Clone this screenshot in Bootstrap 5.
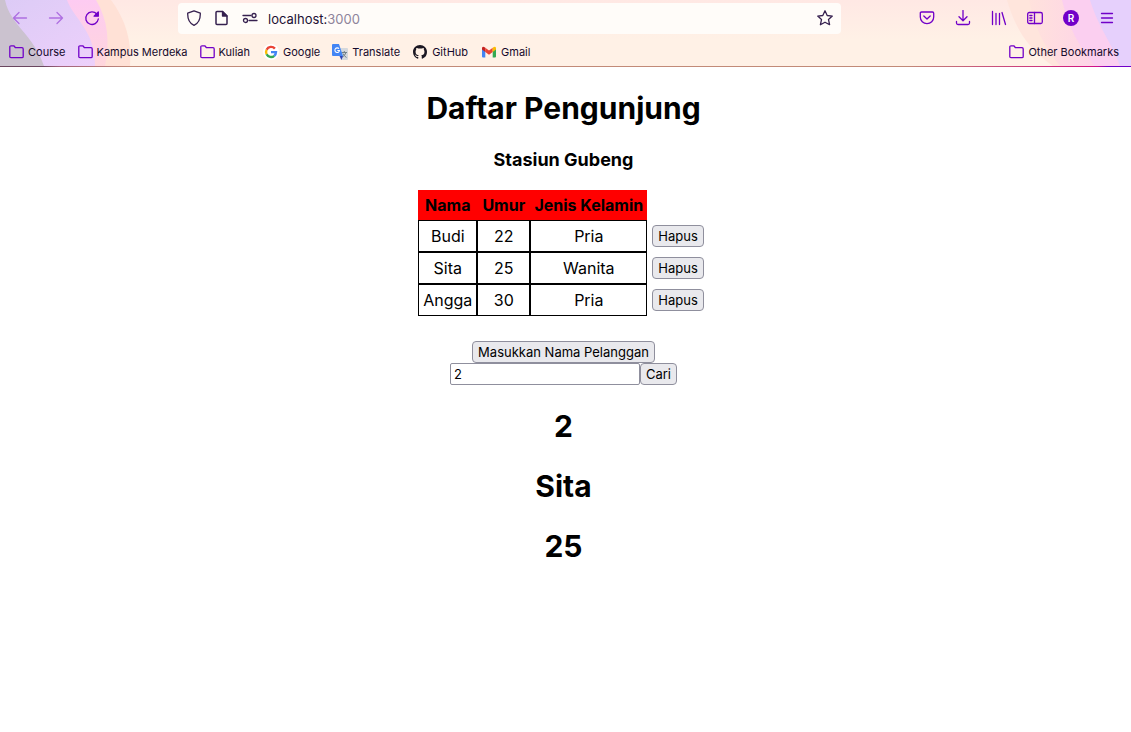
<!DOCTYPE html>
<html lang="id">
<head>
<meta charset="utf-8">
<meta name="viewport" content="width=device-width, initial-scale=1">
<title>Daftar Pengunjung</title>
<link rel="stylesheet" href="https://cdn.jsdelivr.net/npm/bootstrap@5.3.0/dist/css/bootstrap.min.css">
<script src="https://cdn.jsdelivr.net/npm/bootstrap@5.3.0/dist/js/bootstrap.bundle.min.js" defer></script>
<style>
  body { font-family: Inter, "Liberation Sans", sans-serif; font-size: 16px; color: #000; background: #fff; }
  .browser { background: linear-gradient(#ffe8e4, #fff1e6 60%); position: relative; isolation: isolate; }
  .browser::after { content: ""; display: block; height: 1px; background: linear-gradient(90deg, #6b4760 0, #6b4760 44px, #a3627e 60px, #c28a78 130px, #c28a78 80%, #d0207f 95%, #d0108a 97%, #7100c8 98%); }
  .theme-art { position: absolute; top: 0; height: 66px; z-index: -1; }
  .toolbar { height: 36px; padding: 0 6px 0 2px; }
  .tool { width: 36px; height: 36px; padding: 0; border: 0; background: none; color: #7100c8; display: grid; place-items: center; }
  .tool:disabled { opacity: .45; color: #7100c8; }
  .address { height: 31px; margin: 0 68px; border-radius: 4px; background: #fffcf9; color: #36204f; padding: 0 8px; }
  .address-text { font-size: 13px; line-height: 20px; color: #1d1133; padding: 2px 0 0 10px; }
  .address-text span { color: #8e849b; }
  .bookmarks { height: 30px; padding: 2px 12px 0 9px; gap: 12px; }
  .bookmarks a { font-size: 11px; line-height: 16px; color: #15092b; text-decoration: none; display: flex; align-items: center; gap: 4px; white-space: nowrap; }
  svg { display: block; flex: none; }
  .line { fill: none; stroke: currentColor; stroke-width: 1.3; stroke-linecap: round; stroke-linejoin: round; }
  .folder { color: #7100c8; }
  main { padding: 22px 4px 0 0; text-align: center; }
  .big { font-size: 30px; line-height: 38px; font-weight: 700; margin: 0 0 22px; }
  .station { font-size: 18px; line-height: 22px; font-weight: 700; margin: 0 0 19px; }
  .visitors { border-collapse: separate; border-spacing: 0; margin: 0 auto 25px; font-size: 16px; line-height: 20px; }
  .visitors th { background: red; padding: 5px 0; font-weight: 700; text-align: center; white-space: nowrap; }
  .visitors td { border: 1px solid #000; padding: 5px 4px; }
  .visitors th:first-child { width: 59px; }
  .visitors th:nth-child(2) { width: 53px; }
  .visitors th:nth-child(3) { width: 117px; }
  .visitors .bare { border: 0; padding: 5px; background: none; }
  .plain-btn { display: block; height: 22px; font-size: 13px; line-height: 20px; padding: 0 5px; border: 1px solid #8f8f9d; border-radius: 4px; background: #e9e9ed; color: #000; white-space: nowrap; }
  .search-form { margin-bottom: 22px; }
  .search-box { width: 190px; height: 22px; font-size: 13px; padding: 0 3px; border: 1px solid #8f8f9d; border-radius: 2px; color: #000; }
</style>
</head>
<body>
<header class="browser">
  <svg class="theme-art start-0" width="140" height="66" viewBox="0 0 140 66" aria-hidden="true">
    <defs><linearGradient id="lav" x2="1" y2="1"><stop stop-color="#dccbf6"/><stop offset="1" stop-color="#edd0fb"/></linearGradient>
    <linearGradient id="pnk" x2="0" y2="1"><stop stop-color="#fdcbf2"/><stop offset="1" stop-color="#ffd6dc"/></linearGradient></defs>
    <path d="M0 0H111C126 20 132 42 130 66H0Z" fill="#ffe1d6"/>
    <path d="M0 0H96C108 20 110 42 105 66H0Z" fill="url(#pnk)"/>
    <path d="M0 0H67C73 18 96 31 95 66H0Z" fill="url(#lav)"/>
    <path d="M0 0H5C10 25 34 35 44 66H0Z" fill="#cbc2cf"/>
  </svg>
  <svg class="theme-art end-0" width="131" height="66" viewBox="0 0 131 66" aria-hidden="true">
    <defs><linearGradient id="rp" x2="1"><stop stop-color="#ffe2dc"/><stop offset="1" stop-color="#fdcbee"/></linearGradient></defs>
    <path d="M7 0C15 28 28 49 53 66H131V0Z" fill="#ffe5dc"/>
    <path d="M29 0C34 27 45 48 60 66H131V0Z" fill="url(#rp)"/>
    <path d="M62 0C68 26 79 47 95 66H131V0Z" fill="#fbcff0"/>
    <path d="M90 0C99 29 112 43 120 66H131V0Z" fill="#e6d0fc"/>
  </svg>
  <nav class="toolbar d-flex align-items-center" aria-label="Navigasi">
    <button class="tool" disabled aria-label="Kembali"><svg class="line" width="16" height="16" viewBox="0 0 16 16"><path d="M14.500 8H1.500M7 2.500 1.500 8 7 13.500"/></svg></button>
    <button class="tool" disabled aria-label="Maju"><svg class="line" width="16" height="16" viewBox="0 0 16 16"><path d="M1.500 8H14.500M9 2.500 14.500 8 9 13.500"/></svg></button>
    <button class="tool" aria-label="Muat ulang"><svg class="line" width="16" height="16" viewBox="0 0 16 16"><path d="M12.800 4A6.300 6.300 0 1 0 14.300 9"/><path fill="currentColor" d="M14.300 2V6.200H10.100Z"/></svg></button>
    <div class="address d-flex align-items-center flex-grow-1">
      <svg class="line" width="16" height="16" viewBox="0 0 16 16"><path d="M8 .8 14.300 3.200C14.500 9.500 12 13.500 8 15.300 4 13.500 1.500 9.500 1.700 3.200Z"/></svg>
      <svg class="line mx-2" width="20" height="16" viewBox="-4 0 20 16"><path stroke-width="1.500" d="M3 1.500H8.500L13 6V13.500Q13 14.500 12 14.500H3Q2 14.500 2 13.500V2.500Q2 1.500 3 1.500Z"/><path fill="currentColor" d="M8.500 1.500V6H13Z"/></svg>
      <svg class="line ms-1" width="16" height="16" viewBox="0 0 16 16"><path d="M1 5.500H9M7 10.500H15"/><circle cx="12" cy="5.500" r="2"/><circle cx="3.500" cy="10.500" r="2"/></svg>
      <div class="address-text flex-grow-1">localhost:<span>3000</span></div>
      <svg class="line" width="16" height="16" viewBox="0 0 16 16"><path d="M8 .8 10.200 5.500 15.300 6.100 11.500 9.600 12.600 14.700 8 12.200 3.400 14.700 4.500 9.600.7 6.100 5.800 5.500Z"/></svg>
    </div>
    <button class="tool" aria-label="Pocket"><svg class="line" width="16" height="16" viewBox="0 0 16 16"><path d="M2.500 2H13.500Q14.700 2 14.700 3.200V7A6.700 6.700 0 0 1 1.300 7V3.200Q1.300 2 2.500 2ZM4.800 6 8 9 11.200 6"/></svg></button>
    <button class="tool" aria-label="Unduhan"><svg class="line" width="16" height="16" viewBox="0 0 16 16"><path d="M8 .5V10.500M4 6.800 8 10.700 12 6.800M1.500 11.500V13Q1.500 14.500 3 14.500H13Q14.500 14.500 14.500 13V11.500"/></svg></button>
    <button class="tool" aria-label="Pustaka"><svg class="line" width="16" height="16" viewBox="0 0 16 16"><path d="M1.500 1.500V14.500M5 3.500V14.500M8.500 3.500V14.500M11 2.500 14.500 14.500"/></svg></button>
    <button class="tool" aria-label="Bilah samping"><svg class="line" width="16" height="16" viewBox="0 0 16 16"><rect x=".7" y="2.500" width="14.600" height="11" rx="1.500"/><path d="M7.500 2.500V13.500M2.800 5.500H5M2.800 8H5M2.800 10.500H5"/></svg></button>
    <button class="tool" aria-label="Akun"><svg width="16" height="16" viewBox="0 0 16 16"><circle cx="8" cy="8" r="8" fill="#7100c8"/><text x="8" y="11.500" text-anchor="middle" font-size="10" font-weight="600" fill="#fff">R</text></svg></button>
    <button class="tool" aria-label="Menu"><svg class="line" width="16" height="16" viewBox="0 0 16 16"><path d="M2.500 3.500H13.500M2.500 8H13.500M2.500 12.500H13.500"/></svg></button>
  </nav>
  <nav class="bookmarks d-flex align-items-center" aria-label="Markah">
    <a href="#"><svg class="line folder" width="15" height="14" viewBox="0 0 15 14"><path d="M.8 11.500V2Q.8.800 2 .8H4.800L6.500 2.700H13Q14.200 2.700 14.200 4V11.500Q14.200 12.700 13 12.700H2Q.8 12.700.8 11.500Z"/></svg>Course</a>
    <a href="#"><svg class="line folder" width="15" height="14" viewBox="0 0 15 14"><path d="M.8 11.500V2Q.8.800 2 .8H4.800L6.500 2.700H13Q14.200 2.700 14.200 4V11.500Q14.200 12.700 13 12.700H2Q.8 12.700.8 11.500Z"/></svg>Kampus Merdeka</a>
    <a href="#"><svg class="line folder" width="15" height="14" viewBox="0 0 15 14"><path d="M.8 11.500V2Q.8.800 2 .8H4.800L6.500 2.700H13Q14.200 2.700 14.200 4V11.500Q14.200 12.700 13 12.700H2Q.8 12.700.8 11.500Z"/></svg>Kuliah</a>
    <a href="#"><svg width="17" height="16" viewBox="-1 0 17 16"><circle cx="8" cy="8" r="8" fill="#fff"/><g fill="none" stroke-width="2.400"><path stroke="#ea4335" d="M11.900 4.600A5 5 0 0 0 3.600 5.700"/><path stroke="#fbbc05" d="M3.600 5.700A5 5 0 0 0 3.600 10.300"/><path stroke="#34a853" d="M3.600 10.300A5 5 0 0 0 11.300 11.800"/><path stroke="#4285f4" d="M11.300 11.800A5 5 0 0 0 13 8.100H8"/></g></svg>Google</a>
    <a href="#"><svg width="16" height="16" viewBox="0 0 16 16"><path fill="#d5d8dc" d="M6 4H15Q16 4 16 5V15Q16 16 15 16H9Z"/><path d="M9.500 8.500H15M12.300 7V8.500M14 8.500Q13 11.500 10.500 13M11 9.500Q12 12 14.500 13.500" fill="none" stroke="#718087"/><path fill="#4285f4" d="M1 0H7L11 12H1Q0 12 0 11V1Q0 0 1 0Z"/><path fill="#3045b5" d="M7.500 12H11L9.500 16Z"/><path d="M7 4.700A2.300 2.300 0 1 0 7.500 6.500H5.300" fill="none" stroke="#fff" stroke-width="1.100"/></svg>Translate</a>
    <a href="#"><svg width="16" height="16" viewBox="0 0 16 16"><path transform="translate(1 1) scale(.875)" fill="#1b1722" d="M8 0C3.580 0 0 3.580 0 8c0 3.540 2.290 6.530 5.470 7.590.4.070.55-.17.55-.38 0-.19-.01-.82-.01-1.490-2.010.37-2.530-.49-2.690-.94-.09-.23-.48-.94-.82-1.130-.28-.15-.68-.52-.01-.53.63-.01 1.080.58 1.230.82.72 1.210 1.870.87 2.330.66.07-.52.28-.87.510-1.070-1.780-.2-3.640-.89-3.640-3.950 0-.87.31-1.590.82-2.150-.08-.2-.36-1.020.08-2.120 0 0 .67-.21 2.200.82a7.600 7.600 0 0 1 4 0c1.530-1.040 2.200-.82 2.200-.82.44 1.100.16 1.920.08 2.120.51.56.82 1.270.82 2.150 0 3.070-1.870 3.750-3.650 3.950.29.25.54.73.54 1.480 0 1.070-.01 1.930-.01 2.200 0 .21.15.46.55.38A8 8 0 0 0 16 8c0-4.420-3.580-8-8-8Z"/></svg>GitHub</a>
    <a href="#"><svg width="17" height="16" viewBox="-1 0 17 16"><path fill="#4285f4" d="M1 4V12.500Q1 13.500 2 13.500H4.300V7Z"/><path fill="#34a853" d="M15 4V12.500Q15 13.500 14 13.500H11.700V7Z"/><path fill="#ea4335" d="M4.300 3.800 8 6.600 11.700 3.800V7.900L8 10.700 4.300 7.900Z"/><path fill="#c5221f" d="M1 4Q1.500 1.800 4.300 3.800V7.900L1 5.500Z"/><path fill="#fbbc04" d="M15 4Q14.500 1.800 11.700 3.800V7.900L15 5.500Z"/></svg>Gmail</a>
    <a href="#" class="ms-auto"><svg class="line folder" width="15" height="14" viewBox="0 0 15 14"><path d="M.8 11.500V2Q.8.800 2 .8H4.800L6.500 2.700H13Q14.200 2.700 14.200 4V11.500Q14.200 12.700 13 12.700H2Q.8 12.700.8 11.500Z"/></svg>Other Bookmarks</a>
  </nav>
</header>
<main>
  <h1 class="big">Daftar Pengunjung</h1>
  <h3 class="station">Stasiun Gubeng</h3>
  <table class="visitors">
    <thead><tr><th>Nama</th><th>Umur</th><th>Jenis Kelamin</th><td class="bare"></td></tr></thead>
    <tbody>
      <tr><td>Budi</td><td>22</td><td>Pria</td><td class="bare"><button class="plain-btn">Hapus</button></td></tr>
      <tr><td>Sita</td><td>25</td><td>Wanita</td><td class="bare"><button class="plain-btn">Hapus</button></td></tr>
      <tr><td>Angga</td><td>30</td><td>Pria</td><td class="bare"><button class="plain-btn">Hapus</button></td></tr>
    </tbody>
  </table>
  <form class="search-form" onsubmit="return false">
    <button type="button" class="plain-btn mx-auto">Masukkan Nama Pelanggan</button>
    <div class="d-flex justify-content-center">
      <input class="search-box" type="text" value="2" aria-label="Nama pelanggan">
      <button class="plain-btn">Cari</button>
    </div>
  </form>
  <h1 class="big">2</h1>
  <h1 class="big">Sita</h1>
  <h1 class="big">25</h1>
</main>
</body>
</html>
